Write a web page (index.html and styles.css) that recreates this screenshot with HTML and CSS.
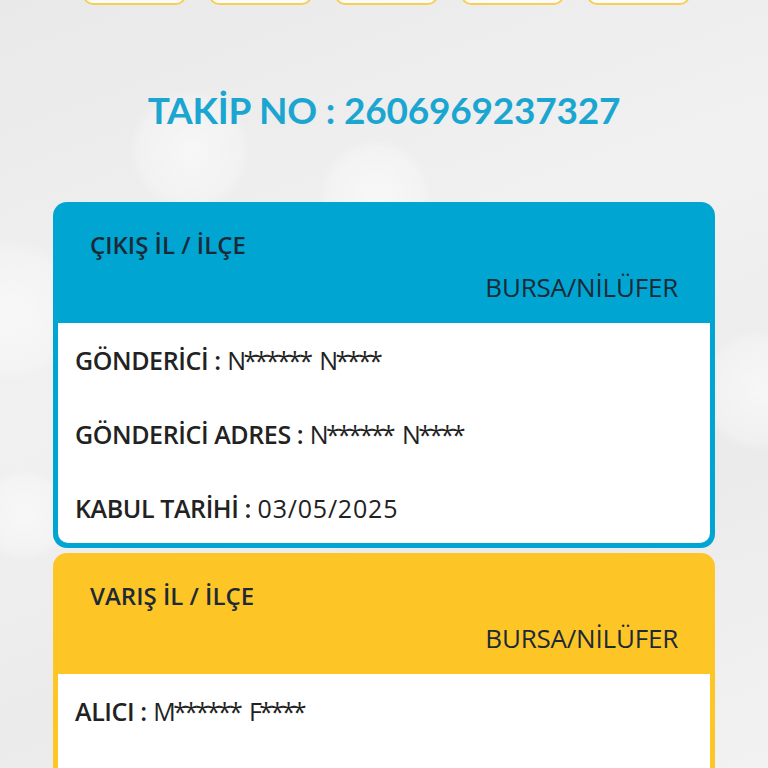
FILE: index.html
```html
<!DOCTYPE html>
<html lang="tr">
<head>
<meta charset="utf-8">
<link rel="stylesheet" href="styles.css">
</head>
<body>
<div class="page">
  <div class="bokeh b1"></div>
  <div class="bokeh b2"></div>
  <div class="bokeh b3"></div>
  <div class="bokeh b4"></div>
  <div class="bokeh b5"></div>
  <div class="tabs">
    <div class="tab"></div>
    <div class="tab"></div>
    <div class="tab"></div>
    <div class="tab"></div>
    <div class="tab"></div>
  </div>
  <h1 class="title">TAKİP NO : 2606969237327</h1>
  <div class="card card-blue">
    <div class="card-head">
      <div class="head-label">ÇIKIŞ İL / İLÇE</div>
      <div class="head-value">BURSA/NİLÜFER</div>
    </div>
    <div class="card-body">
      <div class="row"><span class="key">GÖNDERİCİ :</span> <span class="mask">N****** N****</span></div>
      <div class="row"><span class="key">GÖNDERİCİ ADRES :</span> <span class="mask">N****** N****</span></div>
      <div class="row"><span class="key">KABUL TARİHİ :</span> <span class="date">03/05/2025</span></div>
    </div>
  </div>
  <div class="card card-yellow">
    <div class="card-head">
      <div class="head-label">VARIŞ İL / İLÇE</div>
      <div class="head-value">BURSA/NİLÜFER</div>
    </div>
    <div class="card-body card-body-tall">
      <div class="row"><span class="key">ALICI :</span> <span class="mask">M****** F****</span></div>
    </div>
  </div>
</div>
</body>
</html>
```
FILE: styles.css
```css
html, body {
  margin: 0;
  padding: 0;
}
body {
  background: #ededee;
  font-family: "Open Sans", "Liberation Sans", sans-serif;
  overflow: hidden;
}
.page {
  position: relative;
  height: 768px;
  overflow: hidden;
  background:
    linear-gradient(160deg, #e9e9ea 0%, #f1f1f2 40%, #ebebec 70%, #f2f2f3 100%);
}
.bokeh {
  position: absolute;
  border-radius: 50%;
  background: radial-gradient(circle, rgba(255,255,255,0.55) 0%, rgba(255,255,255,0.25) 60%, rgba(255,255,255,0) 72%);
}
.b1 { width: 120px; height: 120px; left: 130px; top: 90px; }
.b2 { width: 110px; height: 110px; left: 320px; top: 140px; }
.b3 { width: 90px; height: 90px; left: -20px; top: 470px; }
.b4 { width: 140px; height: 140px; left: -60px; top: 240px; }
.b5 { width: 120px; height: 120px; left: 700px; top: 330px; }

.tabs {
  display: flex;
  gap: 23px;
  padding-left: 83px;
  margin-top: -36px;
  position: relative;
}
.tab {
  width: 99px;
  height: 37px;
  background: #fbfbfb;
  border: 2px solid #f7cf55;
  border-radius: 10px;
}
.title {
  position: relative;
  margin: 83px 0 0;
  text-align: center;
  font-family: "Lato", "Liberation Sans", sans-serif;
  font-size: 37px;
  font-weight: 700;
  letter-spacing: -0.2px;
  line-height: 44px;
  color: #1aa6d1;
}
.card {
  position: relative;
  margin: 0 53px;
  border-radius: 14px;
  padding: 0 5px 5px;
}
.card-blue {
  margin-top: 70px;
  background: #00a5d2;
}
.card-yellow {
  margin-top: 5px;
  background: #fec526;
}
.card-head {
  padding: 28px 32px 21px 32px;
  color: #1c2a38;
}
.head-label {
  font-size: 24px;
  line-height: 30px;
  font-weight: 600;
  letter-spacing: 0;
}
.head-value {
  margin-top: 12px;
  text-align: right;
  font-size: 26px;
  line-height: 30px;
  font-weight: 400;
  letter-spacing: -0.2px;
}
.card-body {
  background: #ffffff;
  border-radius: 0 0 10px 10px;
  padding: 22px 17px 20px;
  display: flex;
  flex-direction: column;
  gap: 44px;
  color: #222222;
}
.card-body-tall {
  min-height: 200px;
}
.row {
  font-size: 25px;
  line-height: 30px;
  letter-spacing: 0;
}
.key {
  font-weight: 600;
  letter-spacing: -0.4px;
}
.mask {
  letter-spacing: -2.6px;
  word-spacing: 5px;
}
.date {
  letter-spacing: 0.8px;
}
```
